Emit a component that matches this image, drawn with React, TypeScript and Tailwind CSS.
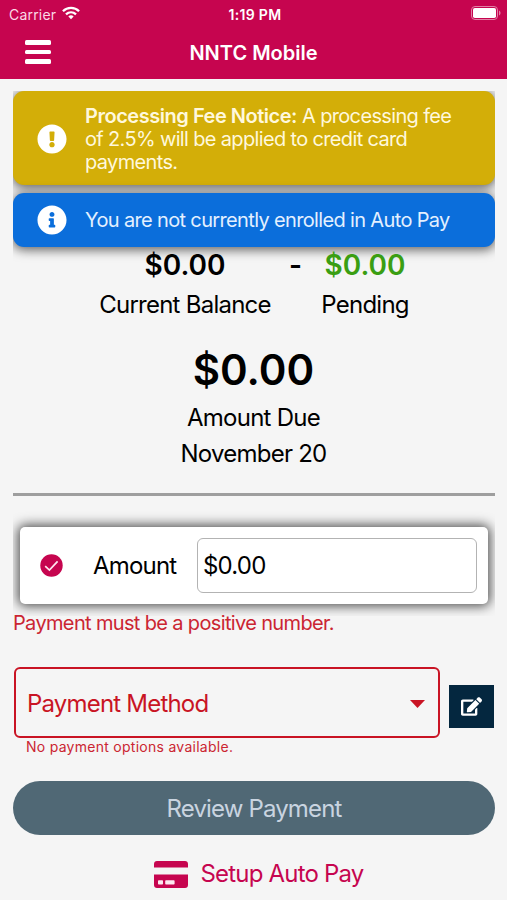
import type { ReactNode } from "react";
import { FaEdit, FaExclamationCircle, FaInfoCircle } from "react-icons/fa";

function StatusBar() {
  return (
    <div className="grid h-7 grid-cols-[1fr_auto_1fr] items-center pl-[9px] pr-[6px] text-[14px] text-white">
      <div className="flex items-center gap-[6px]">
        <span className="tracking-[0.2px] text-[#fbd9e6]">Carrier</span>
        <svg className="mb-[2px]" width="18" height="14" viewBox="0 0 19 14" fill="none" stroke="white" strokeWidth="2.4">
          <path d="M1 5.2C5.7.4 13.3.4 18 5.2" />
          <path d="M4.2 8.5C7.3 5.5 11.7 5.5 14.8 8.5" />
          <path d="M6.7 10.7C8.3 9.1 10.7 9.1 12.3 10.7L9.5 13.6Z" fill="white" stroke="none" />
        </svg>
      </div>
      <span className="text-center font-semibold tracking-[0.3px]">1:19 PM</span>
      <svg className="mb-[2px] justify-self-end" width="30" height="14" viewBox="0 0 30 14">
        <rect x="0.5" y="0.5" width="26" height="13" rx="3.5" fill="none" stroke="#e27fa5" />
        <rect x="2" y="2" width="23" height="10" rx="1.8" fill="white" />
        <path d="M28 4.5C30 5.2 30 8.8 28 9.5Z" fill="#e27fa5" />
      </svg>
    </div>
  );
}

function Header() {
  return (
    <header className="h-[79px] bg-[#c6054f]">
      <StatusBar />
      <div className="grid h-[48px] grid-cols-[1fr_auto_1fr] items-center pl-[25px] pr-[25px]">
        <button className="flex w-[26px] flex-col gap-[5px]" aria-label="Menu">
          <span className="h-[4.5px] rounded-[1.5px] bg-white" />
          <span className="h-[4.5px] rounded-[1.5px] bg-white" />
          <span className="h-[4.5px] rounded-[1.5px] bg-white" />
        </button>
        <h1 className="pt-px text-[20px] font-semibold text-white">NNTC Mobile</h1>
      </div>
    </header>
  );
}

function CheckIcon() {
  return (
    <svg className="ml-[2px] shrink-0" width="23" height="23" viewBox="0 0 23 23" fill="none">
      <circle cx="11.5" cy="11.5" r="11.2" fill="#c6054f" />
      <path d="M5.2 12.2L9.4 16.1L17.6 7.4" stroke="#ffe6ef" strokeWidth="1.7" />
    </svg>
  );
}

function CardIcon() {
  return (
    <svg width="34" height="27" viewBox="0 0 34 27" fill="#c6054f">
      <path d="M0 6.5V3C0 1.2 1.2 0 3 0H31C32.8 0 34 1.2 34 3V6.5Z" />
      <path d="M0 13.5H34V24C34 25.8 32.8 27 31 27H3C1.2 27 0 25.8 0 24Z" />
      <rect x="4" y="19.2" width="5" height="4.3" rx="0.8" fill="#fde8f0" />
      <rect x="11.2" y="19.2" width="9.4" height="4.3" rx="0.8" fill="#fde8f0" />
    </svg>
  );
}

function Notice({ icon, className, children }: { icon: ReactNode; className: string; children: ReactNode }) {
  return (
    <div className={`flex items-center rounded-[11px] pl-[24px] text-[20px] leading-[23px] tracking-[-0.65px] shadow-[0_2px_11px_1px_rgba(0,0,0,0.6)] ${className}`}>
      <span className="w-[48px] shrink-0 text-[30px] text-white">{icon}</span>
      <p className="whitespace-nowrap">{children}</p>
    </div>
  );
}

function Balance({ amount, label, className }: { amount: string; label: string; className: string }) {
  return (
    <div className={`flex flex-col items-center whitespace-nowrap ${className}`}>
      <span className="text-[28px] font-semibold leading-[36px]">{amount}</span>
      <span className="mt-[4px] text-[24px] leading-[36px] tracking-[-0.75px] text-black">{label}</span>
    </div>
  );
}

export default function App() {
  return (
    <div className="h-[900px] w-[507px] overflow-hidden bg-[#f5f5f5] font-['Inter',sans-serif] text-black">
      <Header />

      <main className="px-[13px] pt-[12px]">
        <section className="h-[402px] w-[482px] overflow-hidden">
          <Notice icon={<FaExclamationCircle />} className="h-[94px] bg-[#d3ae08] pt-[2px] text-[#fff8dc]">
            <b className="font-semibold tracking-[-0.47px]">Processing Fee Notice:</b> A processing fee
            <br />
            of 2.5% will be applied to credit card
            <br />
            payments.
          </Notice>
          <Notice icon={<FaInfoCircle />} className="relative mt-[8px] h-[54px] bg-[#0b6edb] text-[#e3f0ff]">
            You are not currently enrolled in Auto Pay
          </Notice>

          <div className="relative flex pl-[86px]">
            <Balance amount="$0.00" label="Current Balance" className="w-[172px]" />
            <span className="ml-[18px] text-[28px] font-semibold leading-[36px]">-</span>
            <Balance amount="$0.00" label="Pending" className="ml-[19px] w-[88px] text-[#3a9e12]" />
          </div>

          <div className="flex flex-col items-center pr-px text-center text-[24px] leading-[36px] tracking-[-0.75px]">
            <strong className="mt-[19px] text-[42px] font-semibold leading-[56px] tracking-normal">$0.00</strong>
            <span className="mt-[2px]">Amount Due</span>
            <span>November 20</span>
          </div>
        </section>

        <hr className="h-[3px] w-[482px] border-0 bg-[#9e9e9e]" />

        <form className="tracking-[-0.8px]">
          <div className="h-[120px] w-[482px] overflow-hidden px-[7px] pt-[31px]">
            <div className="flex h-[77px] items-center rounded-[5px] bg-white pl-[18px] pr-[11px] shadow-[0_0_12px_2px_rgba(0,0,0,0.7)]">
              <CheckIcon />
              <label className="ml-[30px] w-[104px] text-[24px]">Amount</label>
              <div className="flex h-[55px] flex-1 items-center rounded-[6px] border-[1.5px] border-[#b3b3b3] pl-[5px] text-[24px]">
                $0.00
              </div>
            </div>
          </div>
          <p className="relative -mt-[7px] text-[20px] leading-[28px] tracking-[-0.65px] text-[#cb2532]">Payment must be a positive number.</p>

          <div className="mt-[30px] flex text-[#c91424]">
            <div className="ml-px w-[427px]">
              <div className="flex h-[71px] items-center justify-between rounded-[6px] border-[2.5px] border-[#c91424] pl-[11px] pr-[13px]">
                <span className="pt-[2px] text-[24px]">Payment Method</span>
                <svg className="mt-[3px]" width="15" height="8" viewBox="0 0 15 8" fill="currentColor">
                  <path d="M0 0H15L7.5 8Z" />
                </svg>
              </div>
              <p className="pl-[12px] text-[14px] leading-[18px] tracking-[0.27px] text-[#cb2532]">No payment options available.</p>
            </div>
            <button type="button" className="ml-[9px] mt-[18px] flex h-[43px] w-[45px] items-center justify-center bg-[#04273f] text-[21px] text-white" aria-label="Edit">
              <FaEdit />
            </button>
          </div>

          <button type="button" className="mt-[25px] h-[54px] w-[482px] rounded-full bg-[#506875] pt-px text-[24px] tracking-[-0.85px] text-[#c9d4e0]">
            Review Payment
          </button>
        </form>

        <a className="mt-[21px] flex h-[36px] items-center justify-center gap-[12px] pl-[11px] text-[24px] tracking-[-0.8px] text-[#c6054f]">
          <CardIcon />
          Setup Auto Pay
        </a>
      </main>
    </div>
  );
}
